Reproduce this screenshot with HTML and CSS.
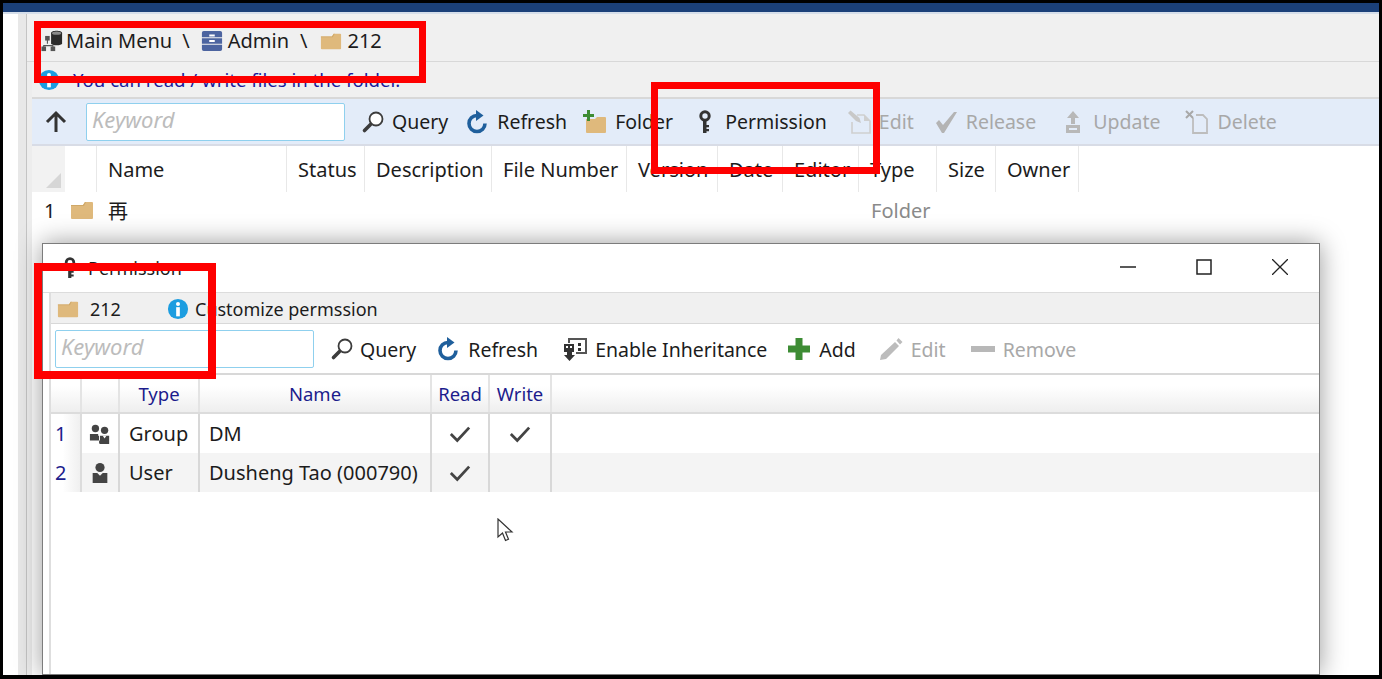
FILE: index.html
```html
<!DOCTYPE html>
<html lang="en">

<head>
    <meta charset="UTF-8">
    <title>Permission</title>
    <link rel="stylesheet" href="styles.css">
</head>

<body>
    <!-- shared icons -->
    <svg class="sprite" aria-hidden="true">
        <symbol id="i-folder" viewBox="0 0 24 24">
            <path fill="#dfb97c" d="M1 7h12l2-3h7a1 1 0 0 1 1 1v15a1 1 0 0 1-1 1H2a1 1 0 0 1-1-1z" />
            <path fill="#cfa868" d="M1 7h12l2-3h1l-2 4H1z" />
        </symbol>
        <symbol id="i-search" viewBox="0 0 24 24">
            <circle cx="15" cy="9" r="6.500" fill="#fff" stroke="#3c3c3c" stroke-width="1.800" />
            <path stroke="#3c3c3c" stroke-width="3.600" stroke-linecap="round" d="M9.500 14.500 3.500 20.500" />
        </symbol>
        <symbol id="i-refresh" viewBox="0 0 24 24">
            <path fill="none" stroke="#1f5f9c" stroke-width="3.600" d="M20 13.500a8 8 0 1 1-8-8" />
            <path fill="#1f5f9c" d="M11 0l7.500 5.500L11 11z" />
        </symbol>
        <symbol id="i-info" viewBox="0 0 24 24">
            <circle cx="12" cy="12" r="11" fill="#1c9de0" />
            <circle cx="12" cy="6.500" r="2.200" fill="#fff" />
            <rect x="10" y="10" width="4" height="10" fill="#fff" />
        </symbol>
        <symbol id="i-check" viewBox="0 0 24 24">
            <path fill="none" stroke="#444" stroke-width="3" d="M2 12l7 7L22 5" />
        </symbol>
        <symbol id="i-key" viewBox="0 0 24 24">
            <circle cx="12" cy="6" r="4.200" fill="none" stroke="#333" stroke-width="3" />
            <path fill="#333" d="M10 10h3.500v13H10zM13.500 15H16v2.200h-2.500zM13.500 19H16v2.200h-2.500z" />
        </symbol>
    </svg>

    <div class="frame">
        <div class="title-strip"></div>

        <div class="workspace">
            <div class="side"></div>
            <div class="rail"></div>

            <main class="panel">
                <div class="crumbs">
                    <svg class="crumb-icon" viewBox="0 0 24 24">
                        <path stroke="#555" stroke-width="1.200" fill="none" d="M7 10v5M3 20v-3h10v3" />
                        <rect x="4.500" y="6.500" width="5" height="5" fill="#555" />
                        <rect x="0.500" y="18" width="5" height="5" fill="#555" />
                        <rect x="10.500" y="18" width="5" height="5" fill="#555" />
                        <path fill="#2a2a2a" d="M11 3.500c0-3.500 12-3.500 12 0v11c0 3-12 3-12 0z" />
                        <ellipse cx="17" cy="3.500" rx="5" ry="1.800" fill="#8a8a8a" />
                    </svg>
                    <span class="crumb-text">Main Menu</span>
                    <span class="crumb-sep">\</span>
                    <svg class="crumb-icon" viewBox="0 0 24 24">
                        <path fill="#4c64a0" d="M1 3a2 2 0 0 1 2-2h18a2 2 0 0 1 2 2v5H1zM1 9h22v6H1zM1 16h22v5a2 2 0 0 1-2 2H3a2 2 0 0 1-2-2z" />
                        <path fill="#fff" d="M9 5h6v2H9zM9 11h6v2H9z" />
                    </svg>
                    <span class="crumb-text crumb-text-far">Admin</span>
                    <span class="crumb-sep crumb-sep-last">\</span>
                    <svg class="crumb-icon"><use href="#i-folder" /></svg>
                    <span class="crumb-text crumb-text-far">212</span>
                </div>

                <div class="notice">
                    <svg class="notice-icon"><use href="#i-info" /></svg>
                    <span>You can read / write files in the folder.</span>
                </div>

                <div class="toolbar main-toolbar">
                    <svg class="up-arrow" viewBox="0 0 24 24">
                        <path fill="none" stroke="#333" stroke-width="3" d="M12 22V3M3 12l9-9 9 9" />
                    </svg>
                    <input class="keyword" type="text" placeholder="Keyword">
                    <div class="tool first-tool"><svg><use href="#i-search" /></svg><span>Query</span></div>
                    <div class="tool"><svg><use href="#i-refresh" /></svg><span>Refresh</span></div>
                    <div class="tool tight-tool">
                        <svg viewBox="0 0 24 24">
                            <path fill="#dfb97c" d="M3 9h9l2-2h8a1 1 0 0 1 1 1v14a1 1 0 0 1-1 1H4a1 1 0 0 1-1-1z" />
                            <path fill="#3d8c34" d="M4 0h3v4h4v3H7v4H4V7H0V4h4z" />
                        </svg>
                        <span>Folder</span>
                    </div>
                    <div class="tool wide-tool"><svg><use href="#i-key" /></svg><span>Permission</span></div>
                    <div class="tool off wide-tool">
                        <svg viewBox="0 0 24 24">
                            <path fill="none" stroke="#cfcfcf" stroke-width="1.600" d="M10 5h7l6 6v12H5V12" />
                            <path fill="#cfcfcf" d="M17 5v6h6z" />
                            <path fill="#c8c8c8" d="M1 3l2.500-2.500 9 7.500 1.500 5-5-2z" />
                        </svg>
                        <span>Edit</span>
                    </div>
                    <div class="tool off wide-tool">
                        <svg viewBox="0 0 24 24">
                            <path fill="#b4b4b4" d="M2 13l3-3 4 5L20 2h3L10 23H8z" />
                        </svg>
                        <span>Release</span>
                    </div>
                    <div class="tool off wider-tool">
                        <svg viewBox="0 0 24 24">
                            <path fill="#b8b8b8" d="M12 1l6 7h-4v6h-4V8H6zM5 15h14v8H5z" />
                            <path fill="#e3ecf9" d="M8 18h8v2H8z" />
                        </svg>
                        <span>Update</span>
                    </div>
                    <div class="tool off wider-tool">
                        <svg viewBox="0 0 24 24">
                            <path fill="none" stroke="#bdbdbd" stroke-width="1.800" d="M8 8v15h14V9l-4-4h-7" />
                            <path fill="none" stroke="#a8a8a8" stroke-width="2" d="M1 1l7 7M8 1L1 8" />
                        </svg>
                        <span>Delete</span>
                    </div>
                </div>

                <div class="file-area">
                    <div class="file-grid file-head">
                        <div class="corner"><span class="corner-mark"></span></div>
                        <div class="head-cell"></div>
                        <div class="head-cell">Name</div>
                        <div class="head-cell">Status</div>
                        <div class="head-cell">Description</div>
                        <div class="head-cell">File Number</div>
                        <div class="head-cell">Version</div>
                        <div class="head-cell">Date</div>
                        <div class="head-cell">Editor</div>
                        <div class="head-cell">Type</div>
                        <div class="head-cell">Size</div>
                        <div class="head-cell">Owner</div>
                    </div>
                    <div class="file-grid file-row">
                        <div class="file-num">1</div>
                        <div class="file-icon"><svg><use href="#i-folder" /></svg></div>
                        <div class="file-name">再</div>
                        <div></div>
                        <div></div>
                        <div></div>
                        <div></div>
                        <div></div>
                        <div></div>
                        <div class="file-type">Folder</div>
                    </div>
                </div>
            </main>
        </div>

        <section class="dialog">
            <div class="dialog-title">
                <svg class="dialog-key"><use href="#i-key" /></svg>
                <span class="dialog-name">Permission</span>
                <div class="window-buttons">
                    <svg viewBox="0 0 16 16"><path stroke="#222" stroke-width="1.500" d="M0 8h16" /></svg>
                    <svg viewBox="0 0 16 16"><rect x="1" y="1" width="14" height="14" fill="none" stroke="#222" stroke-width="1.500" /></svg>
                    <svg viewBox="0 0 16 16"><path stroke="#222" stroke-width="1.300" d="M0 0l16 16M16 0L0 16" /></svg>
                </div>
            </div>

            <div class="dialog-body">
                <div class="dialog-info">
                    <svg class="crumb-icon"><use href="#i-folder" /></svg>
                    <span class="dialog-folder">212</span>
                    <svg class="crumb-icon"><use href="#i-info" /></svg>
                    <span class="dialog-hint">Customize permssion</span>
                </div>

                <div class="toolbar dialog-toolbar">
                    <input class="keyword" type="text" placeholder="Keyword">
                    <div class="tool first-tool"><svg><use href="#i-search" /></svg><span>Query</span></div>
                    <div class="tool"><svg><use href="#i-refresh" /></svg><span>Refresh</span></div>
                    <div class="tool wider-tool">
                        <svg viewBox="0 0 24 24">
                            <path fill="none" stroke="#555" stroke-width="2" d="M6 6V2h17v14H13" />
                            <path fill="#333" d="M1 7h10v8H9v3h3l-5.500 6L1 18h3v-3H1z" />
                            <path fill="#fff" d="M3 9h2v2H3zM7 9h2v2H7z" />
                            <path fill="#333" d="M15 6h3v3h-3zM15 11h3v3h-3z" />
                        </svg>
                        <span>Enable Inheritance</span>
                    </div>
                    <div class="tool">
                        <svg viewBox="0 0 24 24"><path fill="#3d8c34" d="M8.500 1h7v7.500H23v7h-7.500V23h-7v-7.500H1v-7h7.500z" /></svg>
                        <span>Add</span>
                    </div>
                    <div class="tool off wide-tool">
                        <svg viewBox="0 0 24 24"><path fill="#bcbcbc" d="M16 5l4 4L7 22l-6 1 1-5zM17.500 3.500l2-2.500 4 4-2.500 2.500z" /></svg>
                        <span>Edit</span>
                    </div>
                    <div class="tool off wider-tool">
                        <svg viewBox="0 0 24 24"><path fill="#b8b8b8" d="M0 9h24v6H0z" /></svg>
                        <span>Remove</span>
                    </div>
                </div>

                <div class="perm-grid perm-head">
                    <div class="perm-head-cell"></div>
                    <div class="perm-head-cell"></div>
                    <div class="perm-head-cell">Type</div>
                    <div class="perm-head-cell">Name</div>
                    <div class="perm-head-cell">Read</div>
                    <div class="perm-head-cell">Write</div>
                    <div class="perm-head-fill"></div>
                </div>

                <div class="perm-grid perm-row">
                    <div class="perm-num">1</div>
                    <div class="perm-cell perm-icon">
                        <svg viewBox="0 0 24 24">
                            <circle cx="7" cy="6" r="4" fill="#444" />
                            <circle cx="17" cy="8" r="4" fill="#444" />
                            <path fill="#444" d="M1 12h9v2h1v5H1zM12 14h10v9H12l-1-1v-3h1z" />
                            <path fill="#fff" d="M15 14h4l-2 3z" />
                        </svg>
                    </div>
                    <div class="perm-cell">Group</div>
                    <div class="perm-cell">DM</div>
                    <div class="perm-cell perm-mark"><svg><use href="#i-check" /></svg></div>
                    <div class="perm-cell perm-mark"><svg><use href="#i-check" /></svg></div>
                    <div></div>
                </div>

                <div class="perm-grid perm-row perm-row-alt">
                    <div class="perm-num">2</div>
                    <div class="perm-cell perm-icon">
                        <svg viewBox="0 0 24 24">
                            <circle cx="12" cy="6" r="5" fill="#444" />
                            <path fill="#444" d="M4 12h5l3 3 3-3h5v11H4z" />
                        </svg>
                    </div>
                    <div class="perm-cell">User</div>
                    <div class="perm-cell">Dusheng Tao (000790)</div>
                    <div class="perm-cell perm-mark"><svg><use href="#i-check" /></svg></div>
                    <div class="perm-cell"></div>
                    <div></div>
                </div>
            </div>
        </section>

        <svg class="cursor" viewBox="0 0 17 25">
            <path fill="#fff" stroke="#333" stroke-width="1.200" d="M1 1v18l4.500-4 3 7.500 3-1.300-3-7.200h6.500z" />
        </svg>

        <!-- red review marks -->
        <div class="mark mark-crumbs"></div>
        <div class="mark mark-permission"></div>
        <div class="mark mark-dialog"></div>
    </div>
</body>

</html>
```

FILE: styles.css
```css
body {
    margin: 0;
    background-color: #fff;
    font-family: "Noto Sans", "Noto Sans CJK SC", sans-serif;
    font-size: 20px;
    color: #1c1c1c;
}

.sprite {
    display: none;
}

.frame {
    position: relative;
    box-sizing: border-box;
    width: 1382px;
    height: 679px;
    border: 3px solid #000;
    border-bottom-width: 4px;
    overflow: hidden;
    display: flex;
    flex-direction: column;
}

.title-strip {
    height: 9px;
    flex-shrink: 0;
    background-color: #1b4079;
    border-bottom: 2px solid #d5deea;
}

.workspace {
    flex: 1;
    display: flex;
}

.side {
    width: 15px;
}

.rail {
    width: 9px;
    background-color: #e8e8e8;
    border-right: 1px solid #c4c4c4;
    box-sizing: border-box;
}

.panel {
    flex: 1;
    background-color: #ededed;
    padding-left: 5px;
    display: flex;
    flex-direction: column;
}

/* breadcrumb */
.crumbs {
    box-sizing: border-box;
    height: 48px;
    margin-left: -5px;
    padding: 6px 0 0 14px;
    display: flex;
    align-items: center;
    background-color: #f0f0f0;
    border-bottom: 1px solid #d8d8d8;
}

.crumb-icon {
    width: 22px;
    height: 22px;
    flex-shrink: 0;
}

.crumb-text {
    margin-left: 3px;
}

.crumb-text-far {
    margin-left: 5px;
}

.crumb-sep {
    margin: 0 11px 0 10px;
}

.crumb-sep-last {
    margin: 0 13px 0 11px;
}

.notice {
    box-sizing: border-box;
    height: 37px;
    display: flex;
    align-items: center;
    padding-left: 6px;
    gap: 13px;
    background-color: #f0f0f0;
    border-bottom: 2px solid #d8d8d8;
    color: #1a1a9c;
    font-size: 18.6px;
}

.notice-icon {
    width: 22px;
    height: 22px;
}

/* toolbars */
.toolbar {
    display: flex;
    align-items: center;
    flex-shrink: 0;
    box-sizing: border-box;
    font-size: 19.5px;
}

.main-toolbar {
    height: 47px;
    padding-left: 12px;
    background-color: #e3ecf9;
    border-bottom: 2px solid #d8dce6;
}

.up-arrow {
    width: 24px;
    height: 24px;
    margin-right: 18px;
}

.keyword {
    box-sizing: border-box;
    width: 259px;
    height: 38px;
    flex-shrink: 0;
    padding: 0 5px 6px;
    background-color: #fff;
    border: 1px solid #8fd0ee;
    border-radius: 2px;
    font-family: inherit;
    font-size: 22px;
}

.keyword::placeholder {
    color: #bcbcbc;
    font-style: italic;
}

.tool {
    display: flex;
    align-items: center;
    gap: 8px;
    margin-left: 17px;
    white-space: nowrap;
}

.tool svg {
    width: 24px;
    height: 24px;
    flex-shrink: 0;
}

.first-tool {
    margin-left: 16px;
    gap: 7px;
}

.tight-tool {
    margin-left: 16px;
}

.wide-tool {
    margin-left: 20px;
}

.wider-tool {
    margin-left: 25px;
}

.off {
    color: #a8a8a8;
}

/* file list */
.file-area {
    flex: 1;
    background-color: #fff;
}

.file-grid {
    display: grid;
    grid-template-columns: 33px 32px 190px 78px 127px 135px 91px 65px 76px 78px 59px 83px 1fr;
    background-color: #fff;
}

.file-head {
    height: 46px;
}

.corner {
    position: relative;
    background-color: #f2f2f2;
}

.corner-mark {
    position: absolute;
    right: 4px;
    bottom: 4px;
    border-style: solid;
    border-width: 0 0 15px 15px;
    border-color: transparent transparent #d6d6d6 transparent;
}

.head-cell {
    display: flex;
    align-items: center;
    padding-left: 11px;
    border-right: 1px solid #e8e8e8;
    box-sizing: border-box;
}

.file-row {
    height: 36px;
    align-items: center;
}

.file-num {
    padding-left: 12px;
}

.file-icon svg {
    display: block;
    width: 24px;
    height: 24px;
    margin-left: 5px;
}

.file-name {
    padding-left: 11px;
}

.file-type {
    padding-left: 12px;
    color: #8a8a8a;
}

/* permission window */
.dialog {
    position: absolute;
    left: 39px;
    top: 240px;
    bottom: 0;
    width: 1278px;
    display: flex;
    flex-direction: column;
    box-sizing: border-box;
    background-color: #fff;
    border: 1px solid #7c7c7c;
    box-shadow: 0 0 24px rgba(0, 0, 0, 0.4);
}

.dialog-title {
    box-sizing: border-box;
    height: 49px;
    flex-shrink: 0;
    display: flex;
    align-items: center;
    padding: 2px 31px 3px 16px;
    border-bottom: 1px solid #dcdcdc;
}

.dialog-key {
    width: 22px;
    height: 22px;
}

.dialog-name {
    margin-left: 7px;
    font-size: 18px;
}

.window-buttons {
    margin-left: auto;
    margin-top: -2px;
    display: flex;
    gap: 60px;
}

.window-buttons svg {
    width: 16px;
    height: 16px;
}

.dialog-body {
    flex: 1;
    margin-left: 6px;
    border-left: 2px solid #dedede;
    display: flex;
    flex-direction: column;
}

.dialog-info {
    box-sizing: border-box;
    height: 31px;
    flex-shrink: 0;
    display: flex;
    align-items: center;
    padding: 1px 0 0 6px;
    background-color: #f0f0f0;
    border-bottom: 1px solid #d8d8d8;
    font-size: 18px;
}

.dialog-folder {
    margin-left: 11px;
    width: 77px;
}

.dialog-hint {
    margin-left: 6px;
}

.dialog-toolbar {
    height: 51px;
    padding: 1px 0 0 4px;
    background-color: #fff;
    border-bottom: 2px solid #d8d8d8;
}

.dialog-toolbar .tool {
    margin-left: 20px;
}

.dialog-toolbar .first-tool {
    margin-left: 16px;
    gap: 6px;
}

.dialog-toolbar .wide-tool {
    margin-left: 23px;
}

.dialog-toolbar .wider-tool {
    margin-left: 25px;
}

.perm-grid {
    display: grid;
    grid-template-columns: 31px 38px 80px 232px 58px 62px 1fr;
    flex-shrink: 0;
}

.perm-head {
    height: 39px;
    color: #1c1c8c;
    font-size: 18.5px;
    background: linear-gradient(#fff 30%, #eeeeee);
    border-bottom: 2px solid #dcdcdc;
    box-sizing: border-box;
}

.perm-head-cell {
    display: flex;
    align-items: center;
    justify-content: center;
    border-right: 2px solid #e4e4e4;
    box-sizing: border-box;
}

.perm-row {
    height: 39px;
    align-items: stretch;
}

.perm-row-alt {
    background-color: #f4f4f4;
}

.perm-num {
    display: flex;
    align-items: center;
    padding-left: 4px;
    color: #1c1c8c;
    border-right: 2px solid #dcdcdc;
    background: linear-gradient(90deg, #fff 40%, #f0f0f0);
    box-sizing: border-box;
}

.perm-cell {
    display: flex;
    align-items: center;
    padding-left: 9px;
    border-right: 2px solid #d8d8d8;
    box-sizing: border-box;
    white-space: nowrap;
}

.perm-icon,
.perm-mark {
    padding-left: 0;
    justify-content: center;
}

.perm-icon svg {
    width: 22px;
    height: 22px;
}

.perm-mark svg {
    width: 22px;
    height: 22px;
}

.cursor {
    position: absolute;
    left: 494px;
    top: 515px;
    width: 17px;
    height: 25px;
}

/* red boxes over the picture */
.mark {
    position: absolute;
    box-sizing: border-box;
    border: 7px solid #fe0000;
}

.mark-crumbs {
    left: 31px;
    top: 18px;
    width: 392px;
    height: 62px;
}

.mark-permission {
    left: 648px;
    top: 79px;
    width: 229px;
    height: 92px;
}

.mark-dialog {
    left: 31px;
    top: 260px;
    width: 182px;
    height: 116px;
    border-width: 8px;
}
```
